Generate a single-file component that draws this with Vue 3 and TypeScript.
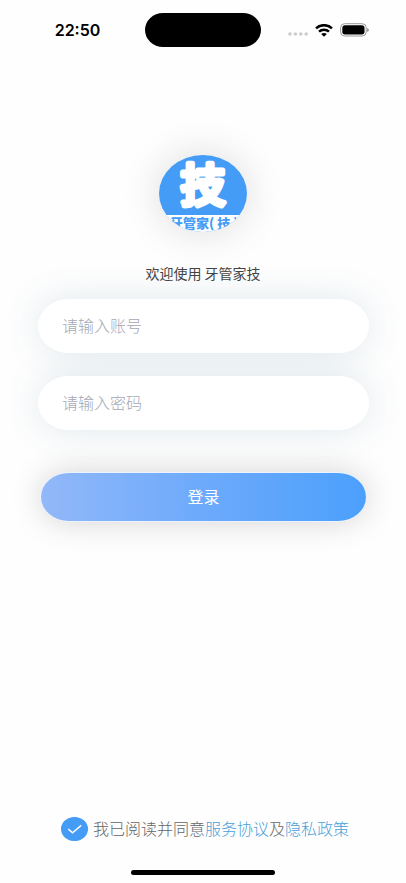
<script setup lang="ts">
import { ref } from 'vue'

const account = ref('')
const password = ref('')
const agreed = ref(true)
</script>

<template>
  <div class="page">
    <header class="status">
      <time class="time">22:50</time>
      <div class="island"></div>
      <div class="indicators">
        <svg class="dots" width="20" height="4" viewBox="0 0 20 4" aria-hidden="true">
          <circle cx="2" cy="2" r="1.8" />
          <circle cx="7.4" cy="2" r="1.8" />
          <circle cx="12.8" cy="2" r="1.8" />
          <circle cx="18.2" cy="2" r="1.8" />
        </svg>
        <svg width="18" height="13" viewBox="0 0 18 13" aria-hidden="true">
          <g fill="none" stroke="#000" stroke-width="2.5">
            <path d="M1 4.4C5.4 .1 12.6 .1 17 4.4" />
            <path d="M4 7.7C6.8 5 11.2 5 14 7.7" />
          </g>
          <path d="M6.2 10C7.8 8.5 10.2 8.5 11.8 10L9 12.8Z" />
        </svg>
        <svg width="29" height="14" viewBox="0 0 29 14" aria-hidden="true">
          <rect x=".6" y=".7" width="25.6" height="12.3" rx="4" fill="none" stroke="#999" />
          <rect x="2.3" y="2.3" width="22.2" height="9.1" rx="2.7" />
          <path d="M27.2 4.9Q28.8 5.4 28.8 6.9T27.2 8.9Z" fill="#888" />
        </svg>
      </div>
    </header>

    <main class="content">
      <div class="logo">
        <svg width="88" height="77" viewBox="0 0 88 77" role="img" aria-label="牙管家技">
          <defs>
            <clipPath id="logo-clip"><ellipse cx="44" cy="38.5" rx="44" ry="38.5" /></clipPath>
          </defs>
          <g clip-path="url(#logo-clip)">
            <rect width="88" height="77" fill="#449cf7" />
            <text class="mark" x="44" y="47" text-anchor="middle">技</text>
            <rect y="60" width="88" height="17" fill="#fff" />
            <text class="caption" x="11" y="73">牙管家( 技 )</text>
          </g>
        </svg>
      </div>
      <h1 class="welcome">欢迎使用 牙管家技</h1>

      <form class="form" @submit.prevent>
        <div class="field">
          <input v-model="account" type="text" placeholder="请输入账号" aria-label="账号" autocomplete="username" />
        </div>
        <div class="field">
          <input v-model="password" type="password" placeholder="请输入密码" aria-label="密码" autocomplete="current-password" />
        </div>
        <button class="login" type="submit">登录</button>
      </form>
    </main>

    <footer class="footer">
      <div class="agreement">
        <span class="check">
          <input id="agree" v-model="agreed" type="checkbox" />
          <svg v-if="agreed" width="27" height="24" viewBox="0 0 27 24" aria-hidden="true">
            <path d="M7.3 12.2L11.6 15.8L20.2 8.4" fill="none" stroke="#fff" stroke-width="1.5" />
          </svg>
        </span>
        <label for="agree">我已阅读并同意<a href="#service">服务协议</a>及<a href="#privacy">隐私政策</a></label>
      </div>
      <div class="home"></div>
    </footer>
  </div>
</template>

<style>
body {
  background: #fefefe;
}
</style>

<style scoped>
.page {
  display: flex;
  flex-direction: column;
  box-sizing: border-box;
  min-height: 100vh;
  overflow: hidden;
  font-family: "Noto Sans CJK SC", sans-serif;
  font-weight: 300;
}

.status {
  display: grid;
  grid-template-columns: 1fr 116px 1fr;
  align-items: center;
  padding-top: 13px;
}

.time {
  padding-left: 10px;
  text-align: center;
  font: 600 16px/20px Inter, sans-serif;
}

.island {
  height: 34px;
  border-radius: 18px / 17px;
  background: #000;
}

.indicators {
  display: flex;
  align-items: center;
  justify-content: flex-end;
  gap: 7px;
  padding-right: 37px;
}

.dots {
  margin-top: 8px;
  fill: #ccc;
}

.content {
  display: flex;
  flex-direction: column;
  align-items: center;
  padding-top: 108px;
}

.logo {
  height: 77px;
  border-radius: 50%;
  box-shadow: 0 0 40px rgba(0, 0, 0, 0.14);
}

.logo svg {
  display: block;
}

.mark {
  fill: #fff;
  stroke: #fff;
  stroke-width: 5px;
  stroke-linejoin: round;
  stroke-linecap: round;
  font-size: 45px;
  font-weight: 500;
}

.caption {
  fill: #449cf7;
  font-size: 13px;
  font-weight: 900;
}

.welcome {
  margin: 31px 0 0;
  color: #444;
  font-size: 14px;
  font-weight: 400;
  line-height: 20px;
}

.form {
  display: flex;
  flex-direction: column;
  align-self: stretch;
  gap: 23px;
  padding: 16px 37px 0 38px;
  isolation: isolate;
}

.field {
  position: relative;
}

.field::before {
  content: "";
  position: absolute;
  inset: 0;
  z-index: -1;
  border-radius: 31px / 27px;
  box-shadow: 0 0 36px rgba(50, 100, 130, 0.15);
}

.field input {
  display: block;
  box-sizing: border-box;
  width: 100%;
  height: 54px;
  padding: 0 24px 2px;
  border: 0;
  border-radius: 31px / 27px;
  outline: 0;
  background: #fff;
  color: #333;
  font: inherit;
  font-size: 16px;
}

.field input::placeholder {
  color: #a4a8b3;
  opacity: 1;
}

.login {
  height: 48px;
  margin: 20px 3px 0;
  padding: 0 0 2px;
  border: 0;
  border-radius: 28px / 24px;
  background: linear-gradient(90deg, #92b8f8, #70abfb 45%, #4ba0fc);
  box-shadow: 0 0 0 1px #edf3fd, 0 0 32px rgba(0, 0, 0, 0.18);
  color: #fff;
  font: inherit;
  font-size: 16px;
  font-weight: 400;
}

.footer {
  display: flex;
  flex-direction: column;
  gap: 28px;
  margin-top: auto;
  padding-bottom: 8px;
}

.agreement {
  display: flex;
  align-items: center;
  gap: 5px;
  padding-left: 15%;
  color: #666;
  font-size: 16px;
  line-height: 24px;
  white-space: nowrap;
}

.agreement label {
  padding-bottom: 2px;
}

.agreement a {
  color: #4a9fd8;
  text-decoration: none;
}

.check {
  position: relative;
  height: 24px;
}

.check input {
  display: block;
  width: 27px;
  height: 24px;
  margin: 0;
  border: 1px solid #bbb;
  border-radius: 50%;
  appearance: none;
}

.check input:checked {
  border-color: #449cf7;
  background: #449cf7;
}

.check svg {
  position: absolute;
  inset: 0;
  pointer-events: none;
}

.home {
  align-self: center;
  width: 144px;
  height: 5px;
  border-radius: 3px;
  background: #000;
}
</style>
